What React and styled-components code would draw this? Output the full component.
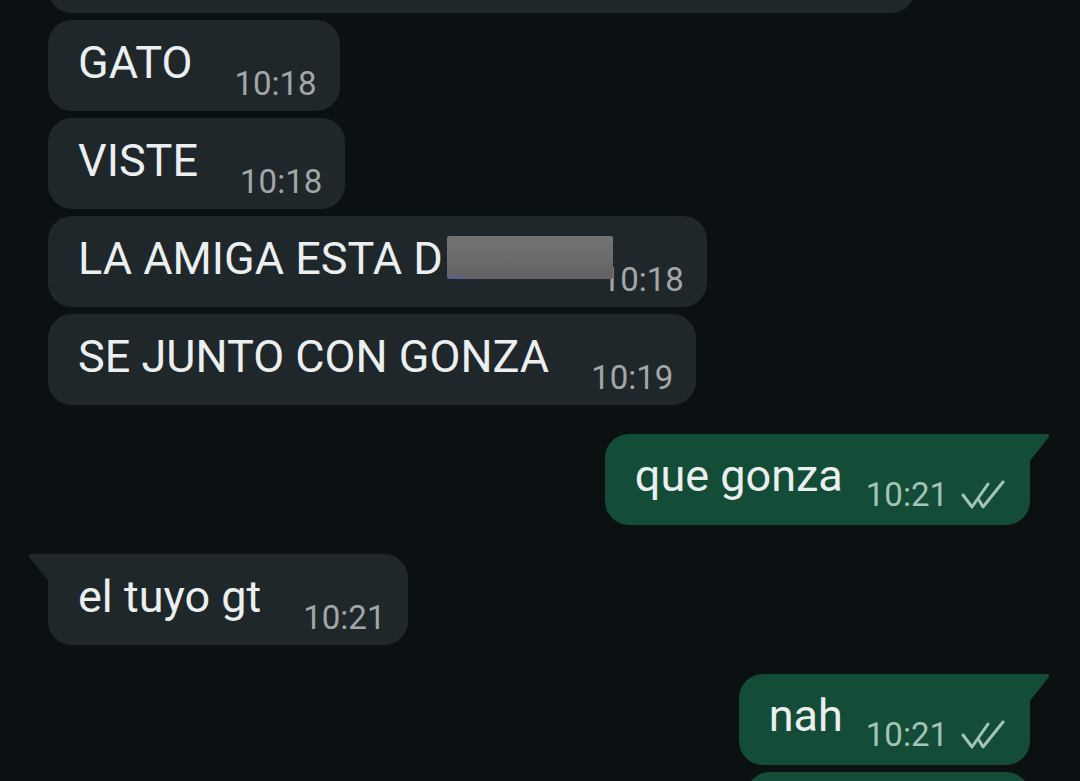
import styled, { createGlobalStyle } from 'styled-components';

const GlobalStyle = createGlobalStyle`
  html, body {
    margin: 0;
    padding: 0;
    background: #0b1013;
    overflow: hidden;
  }
`;

const Chat = styled.div`
  width: 1080px;
  height: 781px;
  overflow: hidden;
  box-sizing: border-box;
  padding: 0 50px 0 48px;
  display: flex;
  flex-direction: column;
  background: #0b1013;
  font-family: Roboto, "Noto Sans", sans-serif;
`;

const Bubble = styled.div`
  position: relative;
  flex-shrink: 0;
  align-self: ${p => (p.$out ? 'flex-end' : 'flex-start')};
  display: flex;
  align-items: flex-end;
  box-sizing: border-box;
  width: ${p => (p.$w ? `${p.$w}px` : 'auto')};
  margin-top: ${p => (p.$top !== undefined ? `${p.$top}px` : p.$tail ? '29px' : '7px')};
  padding: ${p => (p.$out ? '16px 25px 12px 30px' : '17px 23px 11px 30px')};
  background: ${p => (p.$out ? '#134d37' : '#1f272b')};
  border-radius: 24px;
  border-top-right-radius: ${p => (p.$out && p.$tail ? '0' : '24px')};
  border-top-left-radius: ${p => (!p.$out && p.$tail ? '0' : '24px')};

  &::before {
    content: '';
    display: ${p => (p.$tail ? 'block' : 'none')};
    position: absolute;
    top: 0;
    width: 22px;
    height: 30px;
    background: inherit;
    ${p =>
      p.$out
        ? `right: -21px; clip-path: path('M0 0 H17 Q22 0 19 4 L0 28 Z');`
        : `left: -21px; clip-path: path('M22 0 H5 Q0 0 3 4 L22 28 Z');`}
  }
`;

const Text = styled.span`
  font-size: 45px;
  line-height: 52px;
  color: #eceff0;
  white-space: nowrap;
  margin-bottom: 11px;
  margin-right: ${p => (p.$gap !== undefined ? p.$gap : p.$out ? 23 : 42)}px;
`;

const Redact = styled.span`
  display: inline-block;
  position: relative;
  z-index: 1;
  width: 166px;
  height: 43px;
  margin-left: 4px;
  vertical-align: -5px;
  border-radius: 2px;
  background:
    linear-gradient(90deg, rgba(80, 95, 190, 0.6) 0, rgba(80, 95, 190, 0) 30px) bottom / 100% 3px no-repeat,
    linear-gradient(180deg, #737373 0%, #6a6a6a 60%, #626262 100%);
`;

const Meta = styled.span`
  display: inline-flex;
  align-items: center;
  gap: 13px;
  margin-bottom: ${p => (p.$out ? '2px' : '0')};
  font-size: 33px;
  line-height: 32px;
  white-space: nowrap;
  color: ${p => (p.$out ? '#a3c3b4' : '#a2a6a9')};
`;

const Ticks = () => (
  <svg width="44" height="30" viewBox="0 0 44 30" fill="none" stroke="currentColor" strokeWidth="3" strokeLinecap="round" strokeLinejoin="round">
    <path d="M2 15 L11 27 L27 4" />
    <path d="M18 20 L22 27 L42 2" />
  </svg>
);

const messages = [
  { text: 'GATO', time: '10:18' },
  { text: 'VISTE', time: '10:18' },
  { text: 'LA AMIGA ESTA D', time: '10:18', redacted: true },
  { text: 'SE JUNTO CON GONZA', time: '10:19' },
  { text: 'que gonza', time: '10:21', out: true, tail: true },
  { text: 'el tuyo gt', time: '10:21', tail: true },
  { text: 'nah', time: '10:21', out: true, tail: true },
];

export default function App() {
  return (
    <>
      <GlobalStyle />
      <Chat>
        <Bubble $w={867} $top={-78}>
          <Text>&nbsp;</Text>
        </Bubble>
        {messages.map((m, i) => (
          <Bubble key={i} $out={m.out} $tail={m.tail}>
            <Text $out={m.out} $gap={m.redacted ? -11 : undefined}>
              {m.text}
              {m.redacted && <Redact />}
            </Text>
            <Meta $out={m.out}>
              {m.time}
              {m.out && <Ticks />}
            </Meta>
          </Bubble>
        ))}
        <Bubble $out $w={284}>
          <Text $out>&nbsp;</Text>
        </Bubble>
      </Chat>
    </>
  );
}
